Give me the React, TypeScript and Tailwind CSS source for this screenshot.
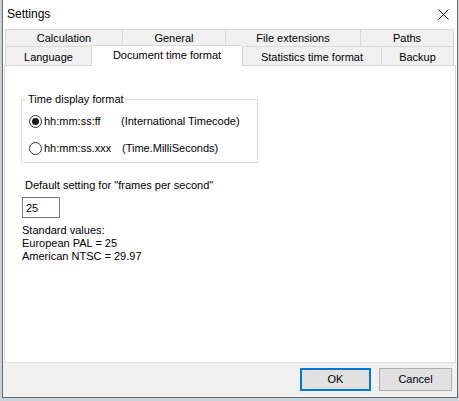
import { useState } from 'react';

const topTabs = [
  { label: 'Calculation', w: 'w-[117px]' },
  { label: 'General', w: 'w-[103px]' },
  { label: 'File extensions', w: 'w-[135px]' },
  { label: 'Paths', w: 'w-[94px] border-r' },
];

function Radio({ checked }: { checked: boolean }) {
  return (
    <span className="flex h-[13px] w-[13px] shrink-0 items-center justify-center rounded-full border border-[#333333] bg-white">
      {checked && <span className="h-[7px] w-[7px] rounded-full bg-[#1a1a1a]" />}
    </span>
  );
}

export default function App() {
  const [format, setFormat] = useState<'ff' | 'ms'>('ff');
  const [fps, setFps] = useState('25');

  return (
    <div className="h-[401px] w-[459px] overflow-hidden bg-[#c9d2d8] font-['Liberation_Sans',Arial,sans-serif] text-[11px] leading-[15px] text-black">
      <div className="ml-[2px] flex h-[398px] w-[456px] flex-col border-x border-b border-[#6b6b6b] bg-white">
        {/* title bar */}
        <div className="flex h-[29px] shrink-0 items-center pl-[4px]">
          <span className="text-[12px]">Settings</span>
          <svg className="ml-auto mr-[8px]" width="11" height="11" viewBox="0 0 11 11">
            <path d="M0.5 0.5L10.5 10.5M10.5 0.5L0.5 10.5" stroke="#111" strokeWidth="1" fill="none" />
          </svg>
        </div>

        {/* tab rows */}
        <div className="pl-[2px]">
          <div className="flex h-[17px]">
            {topTabs.map((t) => (
              <div
                key={t.label}
                className={`${t.w} flex items-center justify-center border-l border-t border-[#d9d9d9] bg-[#f0f0f0] pt-[1px]`}
              >
                {t.label}
              </div>
            ))}
          </div>
          <div className="flex h-[19px]">
            <div className="flex w-[86px] items-center justify-center border-l border-t border-[#d9d9d9] bg-[#f0f0f0] pt-[2px]">
              Language
            </div>
            <div className="relative z-10 -mt-[1px] flex h-[21px] w-[151px] items-center justify-center border-l border-t border-[#d9d9d9] bg-white pb-[2px]">
              Document time format
            </div>
            <div className="flex w-[139px] items-center justify-center border-l border-t border-[#d9d9d9] bg-[#f0f0f0] pt-[2px]">
              Statistics time format
            </div>
            <div className="flex w-[73px] items-center justify-center border-x border-t border-[#d9d9d9] bg-[#f0f0f0] pt-[2px]">
              Backup
            </div>
          </div>
        </div>

        {/* tab page */}
        <div className="ml-[1px] w-[452px] flex-1 border-x border-t border-[#d9d9d9] bg-white">
          <div className="relative ml-[16px] mt-[33px] h-[64px] w-[237px] border border-[#dcdcdc]">
            <span className="absolute left-[5px] top-[-8px] bg-white px-[1px]">Time display format</span>
            <div className="pl-[7px] pt-[13px]">
              <label className="flex h-[16px] items-center" onClick={() => setFormat('ff')}>
                <Radio checked={format === 'ff'} />
                <span className="ml-[2px] w-[77px]">hh:mm:ss:ff</span>
                <span>(International Timecode)</span>
              </label>
              <label className="mt-[11px] flex h-[16px] items-center" onClick={() => setFormat('ms')}>
                <Radio checked={format === 'ms'} />
                <span className="ml-[2px] w-[78px]">hh:mm:ss.xxx</span>
                <span>(Time.MilliSeconds)</span>
              </label>
            </div>
          </div>

          <div className="ml-[20px] mt-[15px]">Default setting for "frames per second"</div>
          <input
            value={fps}
            onChange={(e) => setFps(e.target.value)}
            className="ml-[17px] mt-[4px] block h-[21px] w-[38px] border border-[#7a7a7a] bg-white pl-[3px] outline-none"
          />
          <div className="ml-[17px] mt-[6px] leading-[13px]">
            <div>Standard values:</div>
            <div>European PAL = 25</div>
            <div>American NTSC = 29.97</div>
          </div>
        </div>

        {/* buttons */}
        <div className="flex h-[35px] shrink-0 items-start justify-end gap-[8px] border-t border-[#dfdfdf] bg-[#f0f0f0] pr-[5px] pt-[5px]">
          <button className="flex h-[23px] w-[71px] items-center justify-center border-2 border-[#0078d7] bg-[#e1e1e1]">
            OK
          </button>
          <button className="flex h-[23px] w-[73px] items-center justify-center border border-[#adadad] bg-[#e1e1e1]">
            Cancel
          </button>
        </div>
      </div>
    </div>
  );
}
